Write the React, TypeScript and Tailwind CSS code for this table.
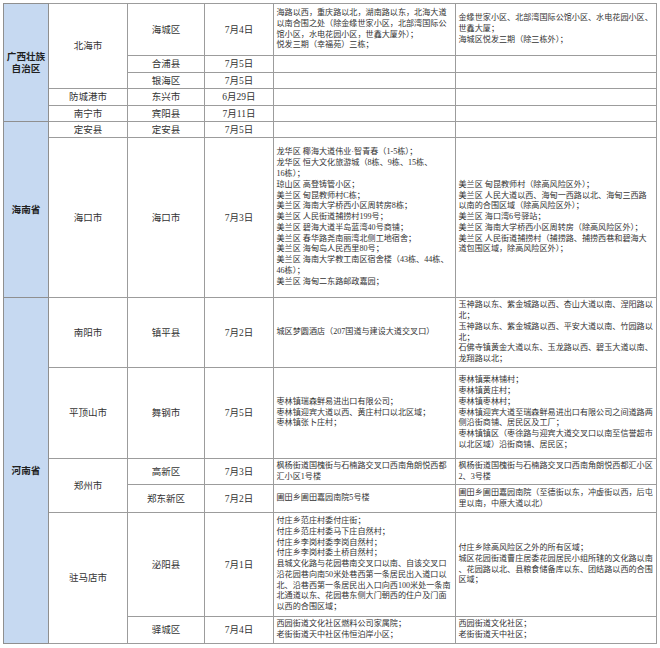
import type { ReactNode } from 'react';

// 各地风险区调整一览（截取部分）
const haichengA = [
    '海路以西，重庆路以北，湖南路以东，北海大道',
    '以南合围之处（除金缘世家小区，北部湾国际公',
    '馆小区，水电花园小区，世鑫大厦外）；',
    '悦发三期（幸福苑）三栋；',
];
const haichengB = [
    '金缘世家小区、北部湾国际公馆小区、水电花园小区、',
    '世鑫大厦；',
    '海城区悦发三期（除三栋外）；',
];
const haikouA = [
    '龙华区 椰海大道伟业·智青春（1-5栋）；',
    '龙华区 恒大文化旅游城（8栋、9栋、15栋、',
    '16栋）；',
    '琼山区 高登铸管小区；',
    '美兰区 甸昆教师村C栋；',
    '美兰区 海南大学桥西小区周转房8栋；',
    '美兰区 人民街道捕捞村199号；',
    '美兰区 碧海大道半岛蓝湾40号商铺；',
    '美兰区 春华路尧南丽湾北侧工地宿舍；',
    '美兰区 海甸岛人民西里80号；',
    '美兰区 海南大学教工南区宿舍楼（43栋、44栋、',
    '46栋）；',
    '美兰区 海甸二东路邮政嘉园；',
];
const haikouB = [
    '美兰区 甸昆教师村（除高风险区外）；',
    '美兰区 人民大道以西、海甸一西路以北、海甸三西路',
    '以南的合围区域（除高风险区外）；',
    '美兰区 海口湾6号驿站；',
    '美兰区 海南大学桥西小区周转房（除高风险区外）；',
    '美兰区 人民街道捕捞村（捕捞路、捕捞西巷和碧海大',
    '道包围区域，除高风险区外）；',
];
const nanyangB = [
    '玉神路以东、紫金城路以西、杏山大道以南、涅阳路以',
    '北；',
    '玉神路以东、紫金城路以西、平安大道以南、竹园路以',
    '北；',
    '石佛寺镇黄金大道以东、玉龙路以西、碧玉大道以南、',
    '龙翔路以北；',
];
const wugangA = [
    '枣林镇瑞森鲜易进出口有限公司；',
    '枣林镇迎宾大道以西、黄庄村口以北区域；',
    '枣林镇张卜庄村；',
];
const wugangB = [
    '枣林镇栗林铺村；',
    '枣林镇黄庄村；',
    '枣林镇枣林村；',
    '枣林镇迎宾大道至瑞森鲜易进出口有限公司之间道路两',
    '侧沿街商铺、居民区及工厂；',
    '枣林镇镇区（枣徐路与迎宾大道交叉口以南至信誉超市',
    '以北区域）沿街商铺、居民区；',
];
const biyangA = [
    '付庄乡范庄村委付庄街；',
    '付庄乡范庄村委马下庄自然村；',
    '付庄乡李岗村委李岗自然村；',
    '付庄乡李岗村委土桥自然村；',
    '县城文化路与花园巷南交叉口以南、自该交叉口',
    '沿花园巷向南50米处巷西第一条居民出入道口以',
    '北、沿巷西第一条居民出入口向西100米处一条南',
    '北通道以东、花园巷东侧大门朝西的住户及门面',
    '以西的合围区域；',
];
const biyangB = [
    '付庄乡除高风险区之外的所有区域；',
    '城区花园街道曹庄居委花园居民小组所辖的文化路以南',
    '、花园路以北、县粮食储备库以东、团结路以西的合围',
    '区域；',
];

function Prov({ span, children }: { span: number; children: ReactNode }) {
    return (
        <td rowSpan={span} className="border border-[#8f8f8f] bg-[#c6d9f1] text-center align-middle text-[9.6px] leading-[12px] font-bold text-[#1f1f1f]">
            {children}
        </td>
    );
}

function C({ span = 1, children }: { span?: number; children?: ReactNode }) {
    return (
        <td rowSpan={span} className="border border-[#9c9c9c] text-center align-middle text-[9.5px] leading-[12px] text-[#333] overflow-hidden whitespace-nowrap">
            {children}
        </td>
    );
}

function T({ lines = [] }: { lines?: string[] }) {
    return (
        <td className="border border-[#9c9c9c] align-middle pl-[2.5px] pr-0 text-[8.1px] leading-[10.8px] text-[#333] overflow-hidden">
            {lines.map((l, i) => (
                <div key={i} className="whitespace-pre">{l}</div>
            ))}
        </td>
    );
}

export default function App() {
    return (
        <div className="w-[660px] h-[648px] bg-white pt-[3px] pl-[3px] overflow-hidden" style={{ fontFamily: '"Liberation Serif", "Noto Sans CJK SC", serif' }}>
            <table className="table-fixed border-collapse w-[653px] border border-[#7a7a7a]">
                <colgroup>
                    <col className="w-[45px]" />
                    <col className="w-[79px]" />
                    <col className="w-[77px]" />
                    <col className="w-[69px]" />
                    <col className="w-[182px]" />
                    <col className="w-[201px]" />
                </colgroup>
                <tbody>
                    <tr className="h-[52px]">
                        <Prov span={5}>广西壮族<br />自治区</Prov>
                        <C span={3}>北海市</C>
                        <C>海城区</C>
                        <C>7月4日</C>
                        <T lines={haichengA} />
                        <T lines={haichengB} />
                    </tr>
                    <tr className="h-[17px]">
                        <C>合浦县</C>
                        <C>7月5日</C>
                        <T />
                        <T />
                    </tr>
                    <tr className="h-[16px]">
                        <C>银海区</C>
                        <C>7月5日</C>
                        <T />
                        <T />
                    </tr>
                    <tr className="h-[17px]">
                        <C>防城港市</C>
                        <C>东兴市</C>
                        <C>6月29日</C>
                        <T />
                        <T />
                    </tr>
                    <tr className="h-[16px]">
                        <C>南宁市</C>
                        <C>宾阳县</C>
                        <C>7月11日</C>
                        <T />
                        <T />
                    </tr>
                    <tr className="h-[16px]">
                        <Prov span={2}>海南省</Prov>
                        <C>定安县</C>
                        <C>定安县</C>
                        <C>7月5日</C>
                        <T />
                        <T />
                    </tr>
                    <tr className="h-[160px]">
                        <C>海口市</C>
                        <C>海口市</C>
                        <C>7月3日</C>
                        <T lines={haikouA} />
                        <T lines={haikouB} />
                    </tr>
                    <tr className="h-[70px]">
                        <Prov span={7}>河南省</Prov>
                        <C>南阳市</C>
                        <C>镇平县</C>
                        <C>7月2日</C>
                        <T lines={['城区梦圆酒店（207国道与建设大道交叉口）']} />
                        <T lines={nanyangB} />
                    </tr>
                    <tr className="h-[91px]">
                        <C>平顶山市</C>
                        <C>舞钢市</C>
                        <C>7月5日</C>
                        <T lines={wugangA} />
                        <T lines={wugangB} />
                    </tr>
                    <tr className="h-[26px]">
                        <C span={2}>郑州市</C>
                        <C>高新区</C>
                        <C>7月3日</C>
                        <T lines={['枫杨街道国槐街与石楠路交叉口西南角朗悦西都', '汇小区1号楼']} />
                        <T lines={['枫杨街道国槐街与石楠路交叉口西南角朗悦西都汇小区', '2、3号楼']} />
                    </tr>
                    <tr className="h-[28px]">
                        <C>郑东新区</C>
                        <C>7月2日</C>
                        <T lines={['圃田乡圃田嘉园南院5号楼']} />
                        <T lines={['圃田乡圃田嘉园南院（至德街以东，冲虚街以西，后屯', '里以南，中原大道以北）']} />
                    </tr>
                    <tr className="h-[104px]">
                        <C span={2}>驻马店市</C>
                        <C>泌阳县</C>
                        <C>7月1日</C>
                        <T lines={biyangA} />
                        <T lines={biyangB} />
                    </tr>
                    <tr className="h-[27px]">
                        <C>驿城区</C>
                        <C>7月4日</C>
                        <T lines={['西园街道文化社区燃料公司家属院；', '老街街道天中社区伟恒泊岸小区；']} />
                        <T lines={['西园街道文化社区；', '老街街道天中社区；']} />
                    </tr>
                </tbody>
            </table>
        </div>
    );
}
